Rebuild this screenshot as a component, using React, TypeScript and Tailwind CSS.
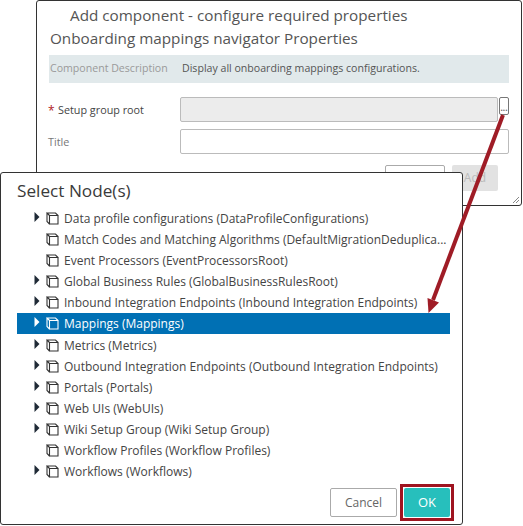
const nodes = [
  { label: "Data profile configurations (DataProfileConfigurations)", arrow: true },
  { label: "Match Codes and Matching Algorithms (DefaultMigrationDeduplica...", arrow: false },
  { label: "Event Processors (EventProcessorsRoot)", arrow: false },
  { label: "Global Business Rules (GlobalBusinessRulesRoot)", arrow: true },
  { label: "Inbound Integration Endpoints (Inbound Integration Endpoints)", arrow: true },
  { label: "Mappings (Mappings)", arrow: true, selected: true },
  { label: "Metrics (Metrics)", arrow: true },
  { label: "Outbound Integration Endpoints (Outbound Integration Endpoints)", arrow: true },
  { label: "Portals (Portals)", arrow: true },
  { label: "Web UIs (WebUIs)", arrow: true },
  { label: "Wiki Setup Group (Wiki Setup Group)", arrow: true },
  { label: "Workflow Profiles (Workflow Profiles)", arrow: false },
  { label: "Workflows (Workflows)", arrow: true },
];

function NodeIcon() {
  return (
    <svg width="13" height="13" viewBox="0 0 13 13" fill="none" stroke="currentColor" strokeWidth="1.1" className="shrink-0">
      <path d="M3.5 3.5h8.5v8.5h-8.5z" />
      <path d="M3.5 3.5L1 1h8.5L12 3.5M1 1v8.5L3.5 12" />
    </svg>
  );
}

function NodeRow({ label, arrow, selected }: { label: string; arrow: boolean; selected?: boolean }) {
  return (
    <div className={`flex h-[21.08px] items-center pl-[17px] ${selected ? "bg-[#0070b4] text-white" : "text-[#444]"}`}>
      <span className="flex w-[12px] shrink-0 justify-start">
        {arrow && (
          <svg width="6" height="10" viewBox="0 0 6 10" className="-mt-[3px]">
            <path d="M0.5 0L5.5 5L0.5 10z" fill={selected ? "#fff" : "#1f2a36"} />
          </svg>
        )}
      </span>
      <span className={selected ? "text-white" : "text-[#333]"}>
        <NodeIcon />
      </span>
      <span className="ml-[5px] whitespace-nowrap text-[12px] leading-[21px]">{label}</span>
    </div>
  );
}

function PropertiesDialog() {
  return (
    <div className="absolute left-[36px] top-0 h-[206px] w-[486px] rounded-[3px] border border-[#333] bg-white">
      <div className="pl-[33px] pt-[4px] text-[15.25px] leading-[20px] text-[#555]">Add component - configure required properties</div>
      <div className="pl-[13px] pt-[3px] text-[15.25px] leading-[20px] text-[#555]">Onboarding mappings navigator Properties</div>
      <div className="ml-[12px] mr-[12px] mt-[7px] flex h-[28px] items-center bg-[#e1e9eb] text-[10.6px]">
        <span className="w-[133px] whitespace-nowrap pl-[1px] text-[#9a9a9a]">Component Description</span>
        <span className="whitespace-nowrap text-[#555]">Display all onboarding mappings configurations.</span>
      </div>
      <div className="mt-[14px] flex h-[25px] items-center pl-[11px] text-[10.8px] text-[#444]">
        <span className="w-[10px] pt-[2px] text-[12px] text-[#b01c1c]">*</span>
        <span className="w-[122px] pt-[2px]">Setup group root</span>
        <div className="h-full w-[318px] rounded-[2px] border border-[#bbb] bg-[#ececec]" />
        <div className="ml-[1px] flex h-[18px] w-[10px] items-center justify-center self-start rounded-[2px] border border-[#777] bg-white pt-[3px] text-[8px] font-bold leading-[8px] text-[#666]">...</div>
      </div>
      <div className="mt-[7px] flex h-[25px] items-center pl-[11px] text-[10.8px] text-[#777]">
        <span className="w-[132px] pt-[2px]">Title</span>
        <div className="h-full w-[329px] rounded-[2px] border border-[#bbb] bg-white" />
      </div>
      <div className="mt-[11px] flex justify-end gap-[7px] pr-[23px]">
        <div className="h-[26px] w-[60px] rounded-[2px] border border-[#aaa] bg-white" />
        <div className="flex h-[26px] w-[46px] items-center justify-center rounded-[2px] bg-[#e2e2e2] text-[12px] text-[#bbb]">Add</div>
      </div>
      <svg width="6" height="6" viewBox="0 0 6 6" className="absolute bottom-[2px] right-[2px]" stroke="#888" strokeWidth="1">
        <path d="M0 6L6 0M3 6L6 3" />
      </svg>
    </div>
  );
}

function SelectDialog() {
  return (
    <div className="absolute left-0 top-[172px] flex h-[353px] w-[463px] flex-col rounded-[3px] border border-[#333] bg-white">
      <div className="pl-[16px] pt-[6px] text-[17.2px] leading-[24px] text-[#3a3a3a]">Select Node(s)</div>
      <div className="ml-[16px] mt-[5px] w-[433px]">
        {nodes.map((n) => (
          <NodeRow key={n.label} label={n.label} arrow={n.arrow} selected={n.selected} />
        ))}
      </div>
      <div className="mt-auto mb-[3px] flex items-center justify-end gap-[3px] pr-[8px]">
        <div className="flex h-[29px] w-[67px] items-center justify-center rounded-[2px] border border-[#aaa] bg-white text-[12px] text-[#666]">Cancel</div>
        <div className="border-[3px] border-[#9f1420] p-[1px]">
          <div className="flex h-[29px] w-[46px] items-center justify-center rounded-[2px] bg-[#27bfbc] text-[13px] text-white">OK</div>
        </div>
      </div>
    </div>
  );
}

export default function App() {
  return (
    <div className="relative h-[526px] w-[523px] overflow-hidden bg-white" style={{ fontFamily: '"Open Sans", "Noto Sans", sans-serif' }}>
      <PropertiesDialog />
      <SelectDialog />
      <svg width="523" height="526" viewBox="0 0 523 526" className="pointer-events-none absolute left-0 top-0">
        <path d="M503 115L433 300" stroke="#9f1c26" strokeWidth="4" fill="none" />
        <path d="M428.5 313L427.5 298L439 302.5z" fill="#9f1c26" />
      </svg>
    </div>
  );
}
